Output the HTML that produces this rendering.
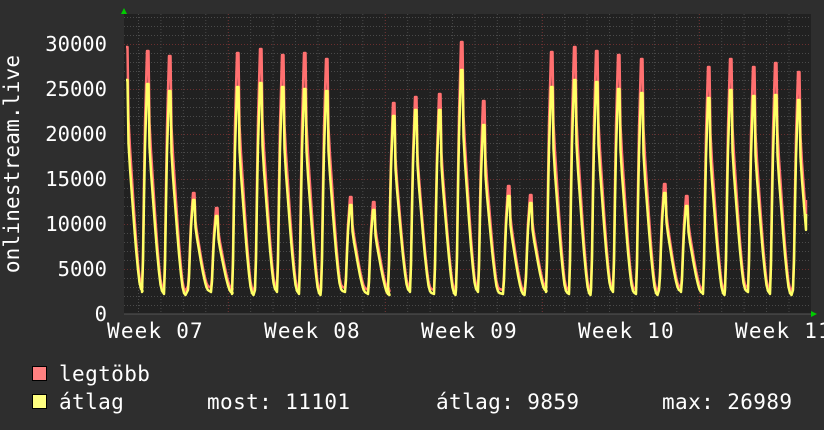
<!DOCTYPE html>
<html><head><meta charset="utf-8"><style>
html,body{margin:0;padding:0;background:#2e2e2e;}
body{width:824px;height:430px;overflow:hidden;position:relative;font-family:"DejaVu Sans Mono","Liberation Mono",monospace;color:#fff;}
svg{position:absolute;left:0;top:0;}
</style></head><body>
<svg id="g" width="824" height="430" xmlns="http://www.w3.org/2000/svg" font-family="DejaVu Sans Mono, Liberation Mono, monospace" font-size="20.5" fill="#fff">
<rect x="124" y="14" width="687" height="300" fill="#212121"/>
<g id="grid"></g>
<g id="lines"></g>
<line x1="124" y1="314" x2="811" y2="314" stroke="#555" stroke-width="1"/>
<polygon points="121,14 127,14 124,8" fill="#00cc00"/>
<polygon points="811,311 811,317 817,314" fill="#00cc00"/>
<g text-anchor="end">
<text x="107" y="51">30000</text>
<text x="107" y="96">25000</text>
<text x="107" y="141">20000</text>
<text x="107" y="186">15000</text>
<text x="107" y="231">10000</text>
<text x="107" y="276">5000</text>
<text x="107" y="321">0</text>
</g>
<g font-size="21" letter-spacing="1.2">
<text x="107" y="338">Week 07</text>
<text x="264" y="338">Week 08</text>
<text x="421" y="338">Week 09</text>
<text x="578" y="338">Week 10</text>
<text x="735" y="338">Week 11</text>
</g>
<text transform="translate(19,164) rotate(-90)" text-anchor="middle" font-size="21" letter-spacing="0.2">onlinestream.live</text>
<rect x="32.5" y="366.5" width="14" height="14" fill="#ff8080" stroke="#000"/>
<rect x="32.5" y="394.5" width="14" height="14" fill="#ffff80" stroke="#000"/>
<g font-size="21" letter-spacing="0.4">
<text x="59" y="381">legtöbb</text>
<text x="59" y="409">átlag</text>
<text x="207" y="409">most: 11101</text>
<text x="436" y="409">átlag: 9859</text>
<text x="662" y="409">max: 26989</text>
</g>
</svg>
<script>
(function(){
var ns="http://www.w3.org/2000/svg";
var grid=document.getElementById('grid'),lines=document.getElementById('lines');
function ln(x1,y1,x2,y2,c,d){var l=document.createElementNS(ns,'line');l.setAttribute('x1',x1);l.setAttribute('y1',y1);l.setAttribute('x2',x2);l.setAttribute('y2',y2);l.setAttribute('stroke',c);l.setAttribute('stroke-width',1);if(d)l.setAttribute('stroke-dasharray',d);grid.appendChild(l);}
for(var v=1000;v<=33000;v+=1000){var y=314-v*0.009+0.5;if(y<14)break;ln(124,y,811,y,v%5000==0?'#6a2e2e':'#4a4a4a','1,2');}
for(var x=138.5;x<811;x+=22.43){ln(x,14,x,314,'#4a4a4a','1,2');}
[228.5,385.5,542.5,699.5].forEach(function(x){ln(x,14,x,314,'#6a2e2e','1,2');});
var P=[[126,47,80],[147,51,84],[169,56,91],[193,193,200],[216,208,216],[237,53,87],[260,49,83],[282,55,87],[304,53,89],[326,59,91],[350,197,205],[373,202,210],[393,103,116],[415,97,110],[439,94,110],[461,42,70],[483,101,125],[508,186,196],[530,195,203],[551,52,87],[574,47,80],[596,51,82],[618,55,89],[641,59,93],[664,184,193],[686,196,206],[708,67,98],[730,59,90],[753,67,96],[775,63,95],[798,72,100]];
function build(idx,tr){var pts=[];
for(var i=0;i<P.length;i++){var p=P[i][0],M=P[i][idx];var T=tr+(i%3)*2;
 if(i>0){pts.push([p-5,T-1]);pts.push([p-4,T-(T-M)*0.15]);pts.push([p-3,T-(T-M)*0.45]);pts.push([p-2,T-(T-M)*0.7]);pts.push([p-1,T-(T-M)*0.85]);}
 pts.push([p,M]);pts.push([p+1.5,M]);
 var f=[[2.5,0.3],[4,0.42],[6,0.55],[8,0.68],[10,0.8],[12,0.9],[13.5,0.96],[15,0.99],[16.5,1]];
 var end=(i==P.length-1)?8:16.5;
 for(var k=0;k<f.length;k++){if(f[k][0]>end)break;pts.push([p+f[k][0],M+(T-M)*f[k][1]]);}
 if(i==P.length-1){pts.push([806,idx==1?200:214]);}
}
return pts.map(function(q){return q[0].toFixed(1)+','+q[1].toFixed(1);}).join(' ');}
function pl(pts,c,w){var e=document.createElementNS(ns,'polyline');e.setAttribute('points',pts);e.setAttribute('fill','none');e.setAttribute('stroke',c);e.setAttribute('stroke-width',w);e.setAttribute('stroke-linejoin','round');lines.appendChild(e);}
pl(build(1,287),'#ff7070',2.5);
pl(build(2,291),'#ffff66',2.5);
})();
</script>
</body></html>
